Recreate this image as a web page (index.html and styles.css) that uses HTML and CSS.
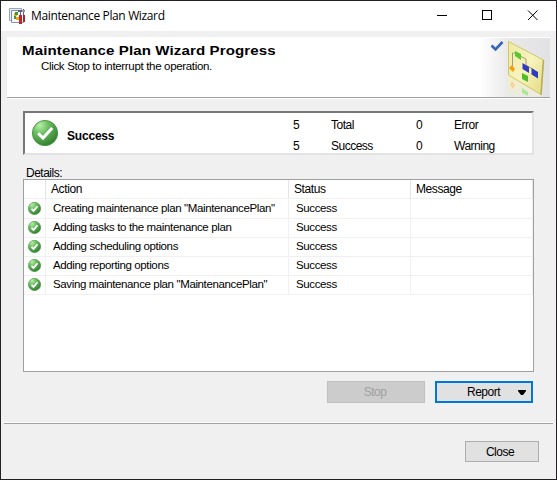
FILE: index.html
```html
<!DOCTYPE html>
<html lang="en">
<head>
<meta charset="utf-8">
<title>Maintenance Plan Wizard</title>
<link rel="stylesheet" href="styles.css">
</head>
<body>
<svg class="defs" width="0" height="0" aria-hidden="true">
  <defs>
    <radialGradient id="green" cx=".3" cy=".2" r=".85"><stop offset="0" stop-color="#b5f2a5"/><stop offset=".4" stop-color="#6dbb62"/><stop offset="1" stop-color="#2f7f2c"/></radialGradient>
    <symbol id="ok" viewBox="0 0 26 26">
      <circle cx="13" cy="13" r="12.6" fill="url(#green)" stroke="#42913b" stroke-width=".9"/>
      <path d="M6.2 13.200 11 18 20.200 8" fill="none" stroke="#fff" stroke-width="3"/>
    </symbol>
    <symbol id="ok-small" viewBox="0 0 12 12">
      <circle cx="6" cy="6" r="5.7" fill="url(#green)" stroke="#3c8d37" stroke-width=".5"/>
      <path d="M3.200 6.300 5.100 8.200 8.800 3.900" fill="none" stroke="#fff" stroke-width="1.6"/>
    </symbol>
  </defs>
</svg>
<div class="window">
  <div class="titlebar">
    <svg class="app-icon" width="17" height="17" viewBox="0 0 17 17">
      <path d="M.5.5h12v12H.5z" fill="#e8eef6" stroke="#9aa5b8"/>
      <path d="M2.500 2.500h12v12h-12z" fill="#f7f9fc" stroke="#8290a8"/>
      <path d="M5 5h3v3H5zM7 9h3v3H7z" fill="#e8b21e"/>
      <path d="M6 4h3v3H6zM5 8h2v3H5z" fill="#389c3b"/>
      <path d="M9 2h4v2H9zM11 3h1v4h-1zM14 1h1v6h-1z" fill="#5d6672"/>
      <path d="M13 2h3v2h-3z" fill="#8d97a5"/>
      <path d="M10 7h3v9h-3z" fill="#c32430"/>
      <path d="M14 7h2v7h-2z" fill="#b3222c"/>
    </svg>
    <span class="title">Maintenance Plan Wizard</span>
    <svg class="controls" width="102" height="12" viewBox="0 0 102 12" fill="none" stroke="#000" shape-rendering="crispEdges">
      <path d="M0 5.500h10M45.500.5h9v9h-9z"/>
      <path d="M91 0.500l9.500 9.500M100.500.5L91 10" shape-rendering="auto"/>
    </svg>
  </div>
  <div class="header">
    <div>
      <h1>Maintenance Plan Wizard Progress</h1>
      <p>Click Stop to interrupt the operation.</p>
    </div>
    <svg class="banner" width="70" height="59" viewBox="0 0 70 59">
      <defs>
        <linearGradient id="fade"><stop offset="0" stop-color="#fff"/><stop offset=".4" stop-color="#e9e9ea"/><stop offset="1" stop-color="#e2e2e4"/></linearGradient>
        <linearGradient id="card" x2="1" y2="1"><stop offset="0" stop-color="#eee9a0"/><stop offset=".5" stop-color="#f7f3bd"/><stop offset="1" stop-color="#e2da80"/></linearGradient>
        <linearGradient id="reflect" x2="0" y2="1"><stop offset="0" stop-color="#f3f0bd"/><stop offset="1" stop-color="#ebebe4"/></linearGradient>
      </defs>
      <path d="M0 0h70v59H0z" fill="url(#fade)"/>
      <path d="M28 37 62 57v2H28z" fill="url(#reflect)"/>
      <path d="M28.500 3.500 63.500 22 61 56.500 28.500 37z" fill="url(#card)" stroke="#cfc66c"/>
      <path d="M63.500 22 61 57" stroke="#b7ad55" stroke-width="1.500"/>
      <path d="M32.500 31V15h4M40 18l6 3v6l8 5" fill="none" stroke="#a39d72"/>
      <path d="m35 13 6 3v6l-6-4z" fill="#54c92f"/>
      <path d="m42.500 25 6.500 4v6l-6.500-4zM51.500 30l6.500 4v6.500l-6.500-4z" fill="#303cc0"/>
      <path d="m42 35 6 3v6l-6-3z" fill="#4fbd2a"/>
      <path d="m32 27 3 4-2 3-4-4z" fill="#f0a01f"/>
      <path d="m32 43 3 4-2 4-3-4z" fill="#f6d3a0"/><path d="m42 50 6 4v4l-6-3z" fill="#aee69a"/>
      <path d="m11.500 7.500 4 4 7-7.500" fill="none" stroke="#3564b8" stroke-width="2.600"/>
    </svg>
  </div>
  <div class="summary">
    <svg width="26" height="26"><use href="#ok"/></svg>
    <strong>Success</strong>
    <div class="counts">
      <span>5</span><span>Total</span><span>0</span><span>Error</span>
      <span>5</span><span>Success</span><span>0</span><span>Warning</span>
    </div>
  </div>
  <div class="label">Details:</div>
  <div class="table">
    <div class="row head"><span></span><span>Action</span><span>Status</span><span>Message</span></div>
    <div class="row"><span><svg width="13" height="13"><use href="#ok-small"/></svg></span><span>Creating maintenance plan "MaintenancePlan"</span><span>Success</span><span></span></div>
    <div class="row"><span><svg width="13" height="13"><use href="#ok-small"/></svg></span><span>Adding tasks to the maintenance plan</span><span>Success</span><span></span></div>
    <div class="row"><span><svg width="13" height="13"><use href="#ok-small"/></svg></span><span>Adding scheduling options</span><span>Success</span><span></span></div>
    <div class="row"><span><svg width="13" height="13"><use href="#ok-small"/></svg></span><span>Adding reporting options</span><span>Success</span><span></span></div>
    <div class="row"><span><svg width="13" height="13"><use href="#ok-small"/></svg></span><span>Saving maintenance plan "MaintenancePlan"</span><span>Success</span><span></span></div>
  </div>
  <div class="actions">
    <button class="stop" disabled>Stop</button>
    <button class="report"><span>Report</span><svg width="8" height="5" viewBox="0 0 8 5"><path d="M0 0h8v1L5 5H3L0 1z"/></svg></button>
  </div>
  <div class="rule"></div>
  <button class="close">Close</button>
</div>
</body>
</html>
```
FILE: styles.css
```css
* { box-sizing: border-box; }
body { margin: 0; font: 12px/14px "Liberation Sans", Arial, sans-serif; letter-spacing: -.5px; color: #000; }
.defs { position: absolute; }
svg { display: block; flex: none; }
.window { width: 557px; height: 480px; border: 1px solid #222022; background: #f0f0f0; display: flex; flex-direction: column; overflow: hidden; }
.titlebar { height: 30px; background: #fff; display: flex; flex: none; align-items: center; padding: 0 17px 0 8px; }
.title { font: 12px/16px "Open Sans", sans-serif; letter-spacing: -.36px; margin-left: 5px; }
.controls { margin-left: auto; }
.header { margin: 6px 6px 0; height: 62px; flex: none; background: #fff; border-bottom: 1px solid #fff; box-shadow: inset 0 -1px #a0a0a0; display: flex; justify-content: space-between; padding: 1px 0 0 15px; }
h1 { margin: 5px 0 0; font-size: 13.5px; line-height: 16px; letter-spacing: .1px; transform: scaleX(1.116); transform-origin: left; white-space: nowrap; }
p { margin: 0 0 0 19px; line-height: 14px; font-size: 11.5px; letter-spacing: -.33px; }
.summary { margin: 12px 22px 0; height: 44px; flex: none; background: #fff; border: 2px solid; border-color: #777 #e3e3e3 #e3e3e3 #777; display: flex; align-items: center; padding-left: 7px; }
.summary strong { margin: 6px 0 0 9px; letter-spacing: -.2px; }
.counts { margin-left: auto; width: 239px; display: grid; grid-template-columns: 38px 85px 38px 1fr; line-height: 21px; margin-top: 5px; }
.label { margin: 11px 0 0 25px; height: 13px; line-height: 14px; letter-spacing: -.5px; }
.table { margin-left: 22px; width: 511px; height: 193px; border: 1px solid #a0a0a0; background: #fff; flex: none; }
.row { display: grid; grid-template-columns: 22px 243px 122px 122px; height: 19px; line-height: 19px; }
.row > span { border-right: 1px solid #f0f0f0; border-bottom: 1px solid #f0f0f0; padding-left: 7px; white-space: nowrap; font-size: 11.5px; letter-spacing: -.37px; }
.row > span:first-child { padding: 3px 0 0 4px; }
.row.head > span { padding-left: 5px; line-height: 18px; border-right-color: #e5e5e5; font-size: 12px; letter-spacing: -.4px; }
.actions { display: flex; gap: 10px; margin: 9px 23px 0 326px; }
button { font: inherit; letter-spacing: -.5px; padding: 0; border: 1px solid #adadad; background: #e1e1e1; color: #000; }
.stop, .report { width: 98px; height: 22px; }
.stop { background: #ccc; border-color: #bfbfbf; color: #a0a0a0; padding-right: 2px; }
.report { border: 2px solid #0078d7; display: flex; align-items: center; padding: 0 5px 0 30px; justify-content: space-between; }
.rule { margin: 19px 3px 0; height: 2px; flex: none; background: #a0a0a0; border-top: 1px solid #fff; }
.close { margin: 17px 17px 0 auto; width: 74px; height: 21px; flex: none; padding-right: 4px; }
```
